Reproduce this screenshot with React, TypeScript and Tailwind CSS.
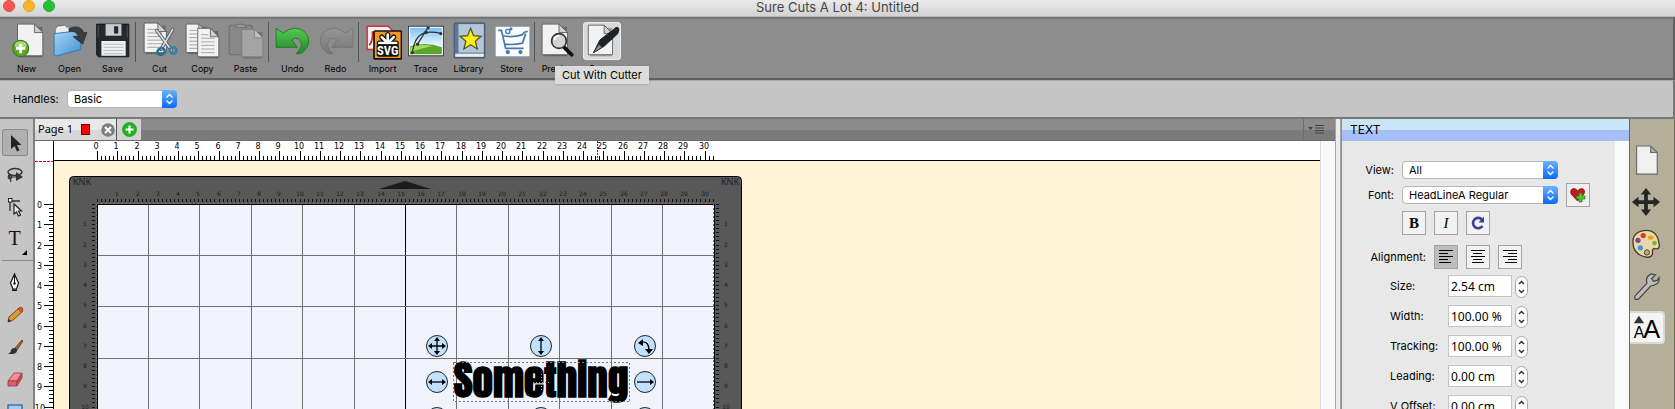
import { useId, type ReactNode } from "react";

const UNIT = 20.25;
const range = (n: number) => Array.from({ length: n }, (_, i) => i);

/* ---------- toolbar icons (36x36) ---------- */

function Sheet({ x = 0, y = 0, w = 25, h = 31, fill = "#f2f2f2", lines = false, stroke = "#555" }: { x?: number; y?: number; w?: number; h?: number; fill?: string; lines?: boolean; stroke?: string }) {
  return (
    <g transform={`translate(${x} ${y})`}>
      <path d={`M1.5 1.5H${w - 0.5}V${h + 0.5}H1.5Z`} fill="#000" opacity=".25" transform="translate(0 1)" />
      <path d={`M0 0H${w - 8}L${w} 8V${h}H0Z`} fill={fill} stroke={stroke} strokeWidth=".8" />
      <path d={`M${w - 8} 0L${w} 8H${w - 8}Z`} fill="#cfcfcf" stroke={stroke} strokeWidth=".8" />
      {lines && range(6).map((i) => <path key={i} d={`M3 ${6 + i * 3.4}H${i < 1 ? w - 10 : w - 4}`} stroke="#aaa" strokeWidth="1" />)}
    </g>
  );
}

function NewIcon() {
  return (
    <>
      <Sheet x={9} y={2} w={24} h={30} />
      <circle cx="12" cy="25" r="7.6" fill="#5da626" stroke="#3f7d16" />
      <ellipse cx="12" cy="21.8" rx="5.6" ry="3.6" fill="#a5d977" />
      <path d="M12 20.5v9M7.5 25h9" stroke="#fff" strokeWidth="2.6" />
    </>
  );
}
function OpenIcon() {
  const id = useId();
  return (
    <>
      <defs><linearGradient id={id} x2="1" y2="1"><stop stopColor="#a6d8f8" /><stop offset="1" stopColor="#4490d0" /></linearGradient></defs>
      <path d="M4 7L6 4L13 3L15 5L26 4L29 10L26 26L4 30Z" fill="#e7eef4" stroke="#567" strokeWidth=".7" />
      <path d="M3 11L29 8L28 26L6 32Q3 33 3 30Z" fill={`url(#${id})`} stroke="#2f6fa8" strokeWidth=".8" />
      <path d="M17 6Q28 2 31 10L34 10L30 21L21 14L26 13Q23 8 17 9Z" fill="#3a3d40" stroke="#222" strokeWidth=".6" />
    </>
  );
}
function SaveIcon() {
  return (
    <>
      <path d="M4 2H33V33H4L2.500 31V2Z" fill="#26282c" stroke="#111" strokeWidth=".8" />
      <path d="M11 2H26V13H11Z" fill="#c9ccd0" />
      <path d="M19 4h4v7h-4z" fill="#26282c" />
      <path d="M7 18H30V32H7Z" fill="#eef0f2" />
      <path d="M9 21H28M9 24H28M9 27H28M9 30H28" stroke="#b7bcc2" />
      <path d="M4 3v12M31.500 3v12" stroke="#4a4d52" />
    </>
  );
}
function CutIcon() {
  return (
    <>
      <Sheet x={3} y={1} w={21} h={28} lines />
      <path d="M15 8L29 27M30 7L19 26" stroke="#5d6469" strokeWidth="3.4" strokeLinecap="round" />
      <path d="M15 8L29 27M30 7L19 26" stroke="#dfe3e5" strokeWidth="1.4" strokeLinecap="round" />
      <ellipse cx="19" cy="28" rx="3.6" ry="3" fill="none" stroke="#23708f" strokeWidth="2.4" transform="rotate(-30 19 28)" />
      <ellipse cx="30.500" cy="27" rx="3.200" ry="3" fill="none" stroke="#2f86ab" strokeWidth="2.4" />
    </>
  );
}
function CopyIcon() {
  return (<><Sheet x={2} y={2} w={20} h={27} lines /><Sheet x={13} y={6} w={20} h={27} lines /></>);
}
function PasteIcon() {
  return (
    <g opacity=".75">
      <rect x="2" y="3" width="22" height="28" rx="2" fill="#858585" stroke="#636363" />
      <path d="M8 5q0-3 5-3t5 3z" fill="#a5a5a5" stroke="#6a6a6a" />
      <Sheet x={14} y={7} w={20} h={26} fill="#adadad" lines stroke="#777" />
    </g>
  );
}
function Arrow({ redo }: { redo?: boolean }) {
  const id = useId();
  return (
    <g transform={redo ? "matrix(-1 0 0 1 36 0)" : undefined} opacity={redo ? 0.75 : 1}>
      <defs><linearGradient id={id} x2="0" y2="1"><stop stopColor={redo ? "#9a9a9a" : "#58c755"} /><stop offset="1" stopColor={redo ? "#6e6e6e" : "#1f8a24"} /></linearGradient></defs>
      <path d="M2 6L9 10.500Q19 2 29 9Q38 19 27 29Q24 31 21 30Q30 21 23 16Q20 14 17 17L22 24H2Z" fill={`url(#${id})`} stroke={redo ? "#6b6b6b" : "#1c7520"} strokeWidth=".8" strokeLinejoin="round" />
    </g>
  );
}
function ImportIcon() {
  const petals = [-90, -45, 0, -135, 180];
  return (
    <>
      <path d="M3 4H23L27 8V26H3Z" fill="#f4eeee" stroke="#c33" strokeWidth="1.400" />
      <path d="M5 22Q9 17 8 9Q12 18 19 14" stroke="#d22" fill="none" strokeWidth="1.600" />
      <rect x="9.500" y="8.500" width="26" height="26.500" rx="1" fill="#f39a1f" stroke="#111" strokeWidth="1.600" />
      <g stroke="#111" strokeWidth="5" strokeLinecap="round">
        {petals.map((a) => <path key={a} d={`M22.500 20L${22.5 + 8 * Math.cos((a * Math.PI) / 180)} ${20 + 8 * Math.sin((a * Math.PI) / 180)}`} />)}
      </g>
      <g stroke="#fff" strokeWidth="2.600" strokeLinecap="round">
        {petals.map((a) => <path key={a} d={`M22.500 20L${22.5 + 8 * Math.cos((a * Math.PI) / 180)} ${20 + 8 * Math.sin((a * Math.PI) / 180)}`} />)}
      </g>
      <rect x="12" y="21" width="21" height="12" rx="2" fill="#111" />
      <text x="22.500" y="31.500" textAnchor="middle" fontFamily="Roboto Condensed, Open Sans Condensed, Liberation Sans" fontWeight="700" fontSize="12" fill="#fff">SVG</text>
    </>
  );
}
function TraceIcon() {
  const id = useId();
  return (
    <>
      <defs><linearGradient id={id} x2="0" y2="1"><stop stopColor="#7cc0f0" /><stop offset=".65" stopColor="#e8f6ff" /></linearGradient></defs>
      <rect x="1.500" y="4" width="33" height="28" fill="#fff" stroke="#444" />
      <rect x="3" y="5.500" width="30" height="25" fill={`url(#${id})`} />
      <path d="M3 23Q18 18 33 24V30.500H3Z" fill="#5aa52c" />
      <path d="M3 24Q14 20 24 23Q12 25 3 29Z" fill="#a9d860" />
      <path d="M5 30Q7 12 18 10Q24 9 33 11M10 21L20 5" fill="none" stroke="#2c3338" strokeWidth="1.200" />
      <g fill="#2c3338"><circle cx="5" cy="29" r="1.500" /><circle cx="10" cy="21" r="1.500" /><circle cx="18" cy="10" r="1.700" /><circle cx="20" cy="5.500" r="1.500" /><circle cx="32" cy="11" r="1.500" /></g>
    </>
  );
}
function LibraryIcon() {
  return (
    <>
      <rect x="4" y="1" width="29" height="33" rx="1" fill="#5d7896" stroke="#42566e" />
      <rect x="8" y="2" width="24" height="27" fill="#b3c6da" />
      <path d="M5 30H32V33H5Z" fill="#e9eef3" />
      <path d="M19.500 6L22.300 13L29.500 13.500L24 18.200L25.800 25.500L19.500 21.500L13.200 25.500L15 18.200L9.500 13.500L16.700 13Z" fill="#ffee15" stroke="#555126" strokeWidth="1.200" />
    </>
  );
}
function StoreIcon() {
  return (
    <>
      <rect x="2" y="4" width="33" height="29" fill="#fbfcfd" stroke="#7e93ad" />
      <path d="M5 8H8L12 25H29M8.500 13Q19 15 28 12Q29 9 33 9M11 21Q20 22 28 20L31 11" fill="none" stroke="#4a76ad" strokeWidth="1.600" />
      <circle cx="14" cy="28.500" r="2" fill="#4a76ad" /><circle cx="26" cy="28.500" r="2" fill="#4a76ad" />
      <circle cx="14" cy="9" r="2" fill="none" stroke="#4a76ad" strokeWidth="1.300" /><circle cx="17" cy="6.500" r="1.500" fill="#4a76ad" />
    </>
  );
}
function PreviewIcon() {
  return (
    <>
      <Sheet x={2} y={2} w={24} h={29} />
      <path d="M23 24L30 31" stroke="#111" strokeWidth="3.600" strokeLinecap="round" />
      <circle cx="18" cy="18" r="7" fill="#cfd3d6" stroke="#333" strokeWidth="1.600" />
      <path d="M13.500 17q1-4 5-4" stroke="#fff" strokeWidth="1.500" fill="none" />
    </>
  );
}
function CutterIcon() {
  return (
    <>
      <Sheet x={5} y={3} w={23} h={28} />
      <path d="M10 29L16 17L29 7Q33 3 34 7L33 11L20 23Z" fill="#202326" stroke="#111" strokeWidth=".8" />
      <path d="M10 29L15 21L18 24Z" fill="#8c9094" stroke="#222" strokeWidth=".6" />
    </>
  );
}

const GROUPS: { label: string; icon: ReactNode; active?: boolean }[][] = [
  [{ label: "New", icon: <NewIcon /> }, { label: "Open", icon: <OpenIcon /> }, { label: "Save", icon: <SaveIcon /> }],
  [{ label: "Cut", icon: <CutIcon /> }, { label: "Copy", icon: <CopyIcon /> }, { label: "Paste", icon: <PasteIcon /> }],
  [{ label: "Undo", icon: <Arrow /> }, { label: "Redo", icon: <Arrow redo /> }],
  [{ label: "Import", icon: <ImportIcon /> }, { label: "Trace", icon: <TraceIcon /> }, { label: "Library", icon: <LibraryIcon /> }, { label: "Store", icon: <StoreIcon /> }],
  [{ label: "Preview", icon: <PreviewIcon /> }, { label: "Cutter", icon: <CutterIcon />, active: true }],
];

function TitleBar() {
  return (
    <header className="relative flex h-[17px] shrink-0 items-start border-b border-[#b4b4b4] bg-linear-to-b from-[#ebebeb] to-[#d2d2d2] pl-[3px]">
      <div className="flex gap-2">
        <button aria-label="Close window" className="size-3 rounded-full border border-[#e2463f] bg-[#fc5753]" />
        <button aria-label="Minimize window" className="size-3 rounded-full border border-[#dfa023] bg-[#fdb427]" />
        <button aria-label="Zoom window" className="size-3 rounded-full border border-[#1dad2b] bg-[#27c138]" />
      </div>
      <h1 className="absolute inset-x-0 top-0 text-center text-[13px] leading-[14px] text-[#444]">Sure Cuts A Lot 4: Untitled</h1>
    </header>
  );
}

function Toolbar() {
  return (
    <div className="flex h-[63px] shrink-0 border-t-2 border-r-2 border-b-2 border-t-[#777] border-r-[#606060] border-b-[#606060] bg-[#8d8d8d] pt-[3px] pl-[5px]">
      {GROUPS.map((group, g) => (
        <div key={g} className="flex">
          {g > 0 && <span className="mr-[2px] ml-px h-10 w-px bg-[#555]" />}
          {group.map((item) => (
            <button key={item.label} className="relative flex w-[43px] flex-col items-center text-[9px] leading-3 text-black">
              <span className={item.active ? "rounded-sm bg-[#d9d9d9] ring-1 ring-[#ececec] ring-inset" : ""}>
                <svg viewBox="0 0 36 36" className="size-[38px]">{item.icon}</svg>
              </span>
              <span className="mt-[3px]">{item.label}</span>
              {item.active && (
                <span role="tooltip" className="absolute top-[44px] left-[-25px] z-10 bg-[#dcdcdc] px-[7px] text-[11px] leading-[18px] whitespace-nowrap shadow">Cut With Cutter</span>
              )}
            </button>
          ))}
        </div>
      ))}
    </div>
  );
}

function Select({ id, value, options, className = "" }: { id: string; value: string; options: string[]; className?: string }) {
  return (
    <span className={`relative block h-[18px] ${className}`}>
      <select id={id} defaultValue={value} className="block h-full w-full appearance-none rounded-[4px] border border-[#b5b5b5] bg-white pr-4 pl-1.5 text-[11px] leading-4 text-black">
        {options.map((o) => <option key={o}>{o}</option>)}
      </select>
      <svg viewBox="0 0 15 18" className="pointer-events-none absolute top-0 right-0 h-[18px] w-[15px]">
        <defs><linearGradient id={`${id}-g`} x2="0" y2="1"><stop stopColor="#6cb3fa" /><stop offset="1" stopColor="#0a6af6" /></linearGradient></defs>
        <path d="M0 0H11Q15 0 15 4V14Q15 18 11 18H0Z" fill={`url(#${id}-g)`} />
        <path d="M4.500 7.500L7.500 4.500L10.500 7.500M4.500 10.500L7.500 13.500L10.500 10.500" fill="none" stroke="#fff" strokeWidth="1.300" />
      </svg>
    </span>
  );
}

/* ---------- left tools (24x24) ---------- */

const cursor = "M8 4V18L11.500 15L14 20.500L16.500 19.300L14 14H18.500Z";
const TOOLS: { name: string; icon: ReactNode; after?: boolean; active?: boolean; flyout?: boolean }[] = [
  { name: "Select", active: true, icon: <path d={cursor} fill="#222" /> },
  { name: "Lasso", icon: <><ellipse cx="12" cy="9" rx="7" ry="3.500" fill="none" stroke="#333" strokeWidth="1.400" /><circle cx="7" cy="14" r="1.800" fill="none" stroke="#333" strokeWidth="1.200" /><path d="M6 11L8 19M5 14H14" stroke="#333" strokeWidth="1.200" fill="none" /><path d="M13 9V18L20 14Z" fill="#333" /></> },
  { name: "Edit points", icon: <><path d="M8 6H17M7 7V16" stroke="#333" strokeWidth="1.300" /><rect x="5.500" y="3.500" width="3.500" height="3.500" fill="#fff" stroke="#222" /><path d="M11 9V19L13.500 17L15.500 21L17.500 20L15.500 16H18.500Z" fill="#eee" stroke="#222" strokeWidth="1.200" /></> },
  { name: "Text", after: true, flyout: true, icon: <text x="11.500" y="18" textAnchor="middle" fontFamily="Liberation Serif" fontSize="20" fill="#111">T</text> },
  { name: "Pen", icon: <><path d="M11.500 3L7.500 12L10 18H13.500L15.500 12Z" fill="#fff" stroke="#111" strokeWidth="1.200" /><path d="M11.500 4V12" stroke="#111" /><circle cx="11.500" cy="12.500" r="1.200" fill="#111" /><path d="M9 18.500h5v1.500H9z" fill="#111" /></> },
  { name: "Pencil", icon: <><path d="M5 19L6 14L16 5L19.500 8.500L9.500 17.500Z" fill="#e09a2c" stroke="#7a4a10" /><path d="M15 6L17 4Q20 4 20 7L18.500 9.500Z" fill="#e8503c" stroke="#8c2b1c" strokeWidth=".6" /><path d="M5 19L5.600 16L8 18Z" fill="#222" /></> },
  { name: "Brush", icon: <><path d="M12 13L19 5L20 6L14 15Z" fill="#a0622e" stroke="#5e3412" strokeWidth=".8" /><path d="M4 19Q8 18 8 15Q10 11.500 14 14Q15 18 10 19Z" fill="#2d3236" /></> },
  { name: "Eraser", icon: <><path d="M5 14L11 6H19L14 14Z" fill="#f08f96" stroke="#a03840" strokeWidth=".8" /><path d="M5 14H14V19H5Z" fill="#d8626b" stroke="#a03840" strokeWidth=".8" /><path d="M14 14L19 6V11L14 19Z" fill="#c54b55" stroke="#a03840" strokeWidth=".8" /></> },
  { name: "Shape", icon: <rect x="5" y="6" width="14" height="12" fill="#a6cdef" stroke="#1d5ea0" strokeWidth="1.200" /> },
];

function ToolPalette() {
  return (
    <nav aria-label="Tools" className="flex w-[35px] shrink-0 flex-col border-r-2 border-[#808080] bg-[#c5c5c5] pt-[10px] pl-0.5">
      {TOOLS.map((t) => (
        <div key={t.name} className={t.after ? "mb-2 border-b border-[#8a8a8a] pb-2" : "mb-[5px]"}>
          <button aria-label={t.name} className={`relative flex h-[27px] w-[26px] items-center justify-center rounded-xs border ${t.active ? "border-[#8a8a8a] bg-[#b0b0b0]" : "border-transparent"}`}>
            <svg viewBox="0 0 24 24" className="size-6">{t.icon}</svg>
            {t.flyout && <svg viewBox="0 0 5 5" className="absolute right-0 bottom-[-4px] size-[5px]"><path d="M5 0V5H0Z" /></svg>}
          </button>
        </div>
      ))}
    </nav>
  );
}

/* ---------- document area ---------- */

function Tabs() {
  return (
    <div className="flex h-[22px] shrink-0 border-b border-[#6b6b6b] bg-linear-to-b from-[#8b8b8b] from-50% to-[#7b7b7b] to-50%">
      <div className="flex w-[82px] items-center border-r border-[#555] bg-linear-to-b from-[#e8e8e8] from-50% to-[#d8d8d8] to-50% pr-px pl-[3px] font-['Noto_Sans'] text-[11px] text-black">
        <span className="whitespace-nowrap">Page 1</span>
        <span className="ml-2 h-[11px] w-[9px] border border-[#700] bg-[#f00]" />
        <button aria-label="Close page" className="ml-auto">
          <svg viewBox="0 0 14 14" className="size-[14px]"><circle cx="7" cy="7" r="6.800" fill="#7f7f7f" /><path d="M4 4L10 10M10 4L4 10" stroke="#fff" strokeWidth="2" /></svg>
        </button>
      </div>
      <button aria-label="Add page" className="flex w-6 items-center justify-center bg-[#d3d3d3]">
        <svg viewBox="0 0 15 15" className="size-[15px]"><circle cx="7.500" cy="7.500" r="7" fill="#1fb51f" stroke="#138a13" strokeWidth=".6" /><path d="M7.500 3.500V11.500M3.500 7.500H11.500" stroke="#fff" strokeWidth="2.200" /></svg>
      </button>
      <button aria-label="Page list" className="ml-auto flex w-8 items-center border-l border-[#6e6e6e] pl-1">
        <svg viewBox="0 0 16 11" className="h-[11px] w-4"><path d="M0 3H5L2.500 6Z" fill="#444" /><path d="M7 1.500H16M7 4H16M7 6.500H16M7 9H16" stroke="#444" strokeWidth="1" /></svg>
      </button>
    </div>
  );
}

function TopRuler() {
  return (
    <svg className="block h-5 w-full border-b border-black bg-white" aria-label="Horizontal ruler" fontFamily="DejaVu Sans" fontSize="8" textAnchor="middle">
      {range(153).map((i) => <path key={i} shapeRendering="crispEdges" d={`M${Math.round(43 + (i * UNIT) / 5) + 0.5} ${i % 5 ? 15 : 10}V19`} stroke="#000" />)}
      {range(31).map((i) => <text key={i} x={Math.round(42 + i * UNIT)} y="8">{i}</text>)}
      <path d="M543.500 0V19" stroke="#e00000" strokeDasharray="2 1" shapeRendering="crispEdges" />
    </svg>
  );
}
function SideRuler() {
  return (
    <svg className="block h-full w-[19px] border-r border-black bg-white" aria-label="Vertical ruler" fontFamily="DejaVu Sans" fontSize="8" textAnchor="end">
      <path d="M0 .5H18" stroke="#e00000" strokeDasharray="3 1" shapeRendering="crispEdges" />
      {range(160).map((i) => <path key={i} shapeRendering="crispEdges" d={`M${i % 5 ? 14 : 9} ${Math.round(43 + (i * UNIT) / 5) + 0.5}H18`} stroke="#000" />)}
      {range(11).map((i) => <text key={i} x={i > 9 ? 10 : 7} y={Math.round(47 + i * UNIT)}>{i}</text>)}
    </svg>
  );
}

const HANDLES: [number, number, string, string][] = [
  [383, 185, "M-7 0H7M0 -7V7", "M-9 0l4-3v6zM9 0l-4-3v6zM0-9l-3 4h6zM0 9l-3-4h6z"],
  [487, 185, "M0 -6V6", "M0-9l-3 4h6zM0 9l-3-4h6z"],
  [591, 185, "M-4 -4Q4 -5 4 4", "M-7-3l5-4v7zM4 8l-4-5h8z"],
  [383, 221, "M-6 0H6", "M-9 0l4-3v6zM9 0l-4-3v6z"],
  [591, 221, "M-8 0H6", "M9 0l-4-3v6z"],
  [383, 257, "M-4 -4L4 4", ""],
  [487, 257, "M0 -7V7", ""],
  [591, 257, "M-4 4L4 -4", ""],
];

function Canvas() {
  return (
    <svg className="block h-full w-full bg-[#fff5d6]" aria-label="Cutting mat" fontFamily="DejaVu Sans">
      <rect x="15.500" y="15.500" width="672" height="700" rx="4" fill="#585858" stroke="#000" />
      <g fill="#222" fontFamily="Noto Sans" fontSize="9"><text x="19" y="24">KNK</text><text x="667" y="24">KNK</text></g>
      <path d="M325 28L351 20L377 28Z" fill="#1c1c1c" />
      <g fontSize="6" fill="#1f1f1f" textAnchor="middle">
        {range(30).map((i) => <text key={i} x={Math.round(43 + (i + 1) * UNIT)} y="35">{i + 1}</text>)}
        {range(10).map((i) => <text key={i} x="31" y={Math.round(45 + (i + 1) * UNIT)}>{i + 1}</text>)}
        {range(10).map((i) => <text key={i} x="672" y={Math.round(45 + (i + 1) * UNIT)}>{i + 1}</text>)}
      </g>
      <g stroke="#111" shapeRendering="crispEdges">
        {range(153).map((i) => <path key={i} d={`M${Math.round(43 + (i * UNIT) / 5) + 0.5} 38V41`} />)}
        {range(153).map((i) => <path key={i} d={`M38 ${Math.round(43 + (i * UNIT) / 5) + 0.5}H41M662 ${Math.round(43 + (i * UNIT) / 5) + 0.5}H665`} />)}
      </g>
      <rect x="43.500" y="43.500" width="617" height="700" fill="#f0f3fc" stroke="#000" shapeRendering="crispEdges" />
      <path d="M42.500 43V600M43 42.500H660M659.500 43V600" stroke="#777" strokeDasharray="2 2" fill="none" shapeRendering="crispEdges" />
      <g stroke="#707070" shapeRendering="crispEdges">
        {range(11).map((i) => <path key={i} d={`M${Math.floor(43 + (i + 1) * 51.4) + 0.5} 44V600`} stroke={i === 5 ? "#000" : undefined} />)}
        {range(11).map((i) => <path key={i} d={`M44 ${Math.floor(43 + (i + 1) * 51.4) + 0.5}H660`} />)}
      </g>
      <text x="487" y="236" textAnchor="middle" fontFamily="Impact, Anton, Roboto Condensed, Open Sans Condensed, Noto Sans Condensed, DejaVu Sans Condensed, sans-serif" fontWeight="700" fontSize="41">Something</text>
      <path d="M479 221.500H495M487.500 213V229" stroke="#aaa" strokeDasharray="1 2" shapeRendering="crispEdges" />
      <rect x="399.500" y="201.500" width="176" height="39" fill="none" stroke="#777" strokeDasharray="2 2" shapeRendering="crispEdges" />
      {HANDLES.map(([x, y, line, heads], i) => (
        <g key={i} transform={`translate(${x} ${y})`}>
          <circle r="10.500" fill="#c0e2ff" stroke="#222" /><path d={line} fill="none" stroke="#000" strokeWidth="1.300" /><path d={heads} />
        </g>
      ))}
    </svg>
  );
}

/* ---------- text panel ---------- */

const squareBtn = "flex size-6 items-center justify-center border border-[#a3a3a3]";

function AlignIcon({ kind }: { kind: "left" | "center" | "right" }) {
  const widths = [14, 9, 14, 9, 12];
  return (
    <svg viewBox="0 0 14 14" className="size-[14px]" shapeRendering="crispEdges">
      {widths.map((w, i) => {
        const x = kind === "left" ? 0 : kind === "right" ? 14 - w : Math.floor((14 - w) / 2);
        return <rect key={i} x={x} y={i * 3} width={w} height="1" />;
      })}
    </svg>
  );
}

const FIELDS = [["Size:", "2.54 cm"], ["Width:", "100.00 %"], ["Tracking:", "100.00 %"], ["Leading:", "0.00 cm"], ["V Offset:", "0.00 cm"]];

function TextPanel() {
  return (
    <aside className="flex w-[288px] shrink-0 flex-col border-l border-[#8c8c8c] text-[11px] leading-4 text-black">
      <h2 className="h-[22px] shrink-0 bg-linear-to-b from-[#c9e5f8] from-50% to-[#a7bff8] to-50% pl-2 text-[12px] leading-[22px]">TEXT</h2>
      <div className="flex min-h-0 flex-1">
        <form className="flex min-w-0 flex-1 flex-col overflow-hidden bg-[#e8e8e8] pt-5">
          <div className="flex h-[18px] items-center">
            <label htmlFor="view" className="mr-2 w-[52px] text-right">View:</label>
            <Select id="view" value="All" options={["All", "Favorites"]} className="w-[156px]" />
          </div>
          <div className="mt-1 flex h-6 items-center">
            <label htmlFor="font" className="mr-2 w-[52px] text-right">Font:</label>
            <Select id="font" value="HeadLineA Regular" options={["HeadLineA Regular"]} className="w-[156px]" />
            <button type="button" aria-label="Add to favorites" className={`${squareBtn} ml-2 bg-[#efefef]`}>
              <svg viewBox="0 0 16 16" className="size-4"><path d="M7.500 14L1 7Q-.5 2 4 1.500Q6.500 1.500 7.500 4Q9 1.500 11.500 1.500Q16 2 14 7Z" fill="#c01c1c" stroke="#701010" strokeWidth=".7" /><path d="M9 6h3v3h3v3h-3v3H9v-3H6.500V9H9z" fill="#53c22b" stroke="#2a7a12" strokeWidth=".7" /></svg>
            </button>
          </div>
          <div className="mt-1 ml-[60px] flex gap-2">
            <button type="button" aria-label="Bold" className={`${squareBtn} bg-[#f2f2f2] font-['Liberation_Serif'] text-[15px] font-bold`}>B</button>
            <button type="button" aria-label="Italic" className={`${squareBtn} bg-[#f2f2f2] font-['Liberation_Serif'] text-[15px] italic`}>I</button>
            <button type="button" aria-label="Reset" className={`${squareBtn} bg-[#f2f2f2]`}>
              <svg viewBox="0 0 16 16" className="size-4"><path d="M12 4.500A5.200 5.200 0 1 0 12.500 11" fill="none" stroke="#3c3f94" strokeWidth="2.600" /><path d="M8.500 7.500H14V1.500Z" fill="#3c3f94" /></svg>
            </button>
          </div>
          <div className="mt-[10px] flex items-center gap-2">
            <span className="w-[84px] text-right">Alignment:</span>
            <button type="button" aria-label="Align left" className={`${squareBtn} bg-[#bdbdbd]`}><AlignIcon kind="left" /></button>
            <button type="button" aria-label="Align center" className={`${squareBtn} bg-[#f2f2f2]`}><AlignIcon kind="center" /></button>
            <button type="button" aria-label="Align right" className={`${squareBtn} bg-[#f2f2f2]`}><AlignIcon kind="right" /></button>
          </div>
          <div className="mt-[6px] ml-12 flex flex-col gap-2">
            {FIELDS.map(([label, value]) => (
              <div key={label} className="flex h-[22px] shrink-0 items-center">
                <label htmlFor={label} className="w-[58px]">{label}</label>
                <input id={label} defaultValue={value} className="h-[22px] w-16 border border-[#c4c4c4] bg-white px-0.5 font-['Noto_Sans'] text-[12px]" />
                <button type="button" aria-label={`Step ${label}`} className="mt-0.5 ml-[3px] h-[22px] w-[13px] rounded-full border border-[#aaa] bg-white">
                  <svg viewBox="0 0 11 20" className="h-5 w-[11px]"><path d="M3 7L5.500 4.500L8 7M3 13L5.500 15.500L8 13" fill="none" stroke="#333" strokeWidth="1.500" /></svg>
                </button>
              </div>
            ))}
          </div>
        </form>
        <div className="w-[14px] bg-[#f9f9f9]" />
      </div>
    </aside>
  );
}

const SIDE: { name: string; icon: ReactNode; active?: boolean }[] = [
  { name: "Document", icon: <path d="M6 1H21L28 8V31H6ZM21 1V8H28" fill="#f0f0f0" stroke="#6a6a6a" strokeWidth="1.200" /> },
  { name: "Position", icon: <path d="M16 1L21.500 8H18V14H24V10.500L31 16L24 21.500V18H18V24H21.500L16 31L10.500 24H14V18H8V21.500L1 16L8 10.500V14H14V8H10.500Z" fill="#262626" /> },
  { name: "Color", icon: <><path d="M3 20Q-1 5 12 2Q28 -1 30 16Q31 22 26 21Q22 20 23 26Q22 31 16 30Q6 28 3 20Z" fill="#ead7ab" stroke="#4a3a22" strokeWidth="1.400" /><circle cx="17" cy="25" r="2.800" fill="#b5ae98" stroke="#4a3a22" /><circle cx="13" cy="7" r="2.800" fill="#cf3a2c" /><ellipse cx="21" cy="9" rx="3.200" ry="2.200" fill="#e8a21d" /><circle cx="25" cy="15" r="2.500" fill="#7ab32e" /><circle cx="7.500" cy="12" r="2.800" fill="#84419c" /><circle cx="10" cy="20" r="2.800" fill="#4792d8" /></> },
  { name: "Settings", icon: <path d="M4 27L17 13Q15 5 22 3L26 4L22 8L24 11L28 10L30 7Q31 15 21 16L8 30Q3 31 4 27Z" fill="#bdbdbd" stroke="#444" strokeWidth="1.300" /> },
  { name: "Text", active: true, icon: <><path d="M3 11L8.500 3L14 11Z" fill="#333" /><text x="8.500" y="27" textAnchor="middle" fontFamily="Liberation Sans" fontSize="17">A</text><text x="22" y="27" textAnchor="middle" fontFamily="Liberation Sans" fontSize="27">A</text></> },
];

export default function App() {
  return (
    <div className="flex h-screen flex-col overflow-hidden bg-[#8d8d8d] font-[Inter,sans-serif] text-black">
      <TitleBar />
      <Toolbar />
      <div className="flex h-[39px] shrink-0 items-center border-t border-r-2 border-b-2 border-t-[#a8a8a8] border-r-[#777] border-b-[#777] bg-[#c5c5c5] pl-[13px] text-[11px]">
        <label htmlFor="handles" className="w-[54px]">Handles:</label>
        <Select id="handles" value="Basic" options={["Basic", "Advanced"]} className="w-[110px]" />
      </div>
      <div className="flex min-h-0 flex-1">
        <ToolPalette />
        <main className="flex min-w-0 flex-1 flex-col overflow-hidden">
          <Tabs />
          <div className="flex min-h-0 flex-1">
            <div className="flex min-h-0 w-[19px] shrink-0 flex-col">
              <div className="h-5 shrink-0 border-r border-black bg-white" />
              <div className="min-h-0 flex-1"><SideRuler /></div>
            </div>
            <div className="flex min-w-0 flex-1 flex-col">
              <div className="h-5 shrink-0"><TopRuler /></div>
              <div className="min-h-0 flex-1"><Canvas /></div>
            </div>
            <div className="w-[15px] shrink-0 border-l border-[#dedede] bg-[#f9f9f9]" />
          </div>
        </main>
        <div className="w-[6px] shrink-0 border-x border-[#a5a5a5] bg-[#ececec]" />
        <TextPanel />
        <nav aria-label="Panels" className="flex w-[46px] shrink-0 flex-col gap-[9px] border-r border-l border-[#6b6756] bg-[#b5ae98] pt-[24px]">
          {SIDE.map((s) => (
            <button key={s.name} aria-label={s.name} className={`flex h-[33px] w-[35px] shrink-0 items-center pl-px ${s.active ? "rounded-r-sm border-2 border-l-0 border-[#dcd9ce] bg-[#f4f4f4]" : ""}`}>
              <svg viewBox="0 0 32 32" className="size-[30px]">{s.icon}</svg>
            </button>
          ))}
        </nav>
      </div>
    </div>
  );
}
